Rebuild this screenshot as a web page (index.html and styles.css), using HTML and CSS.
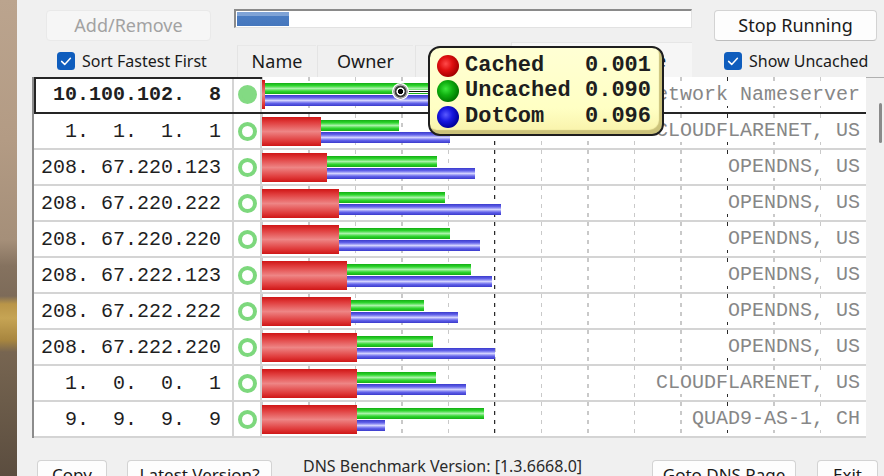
FILE: index.html
```html
<!DOCTYPE html>
<html>
<head>
<meta charset="utf-8">
<title>DNS Benchmark</title>
<link rel="stylesheet" href="styles.css">
</head>
<body>
<div class="desktop"></div>
<div class="window">
  <div class="toprow">
    <button class="btn btn-add" disabled>Add/Remove</button>
    <div class="progress"><div class="progress-fill" style="width:52px"></div></div>
    <button class="btn btn-stop">Stop Running</button>
  </div>
  <div class="midrow">
    <label class="check check-sort"><svg class="box" width="18" height="18" viewBox="0 0 18 18"><rect width="18" height="18" rx="3.5" fill="#0f5dbd"/><path d="M4.6 9.4 L7.7 12.4 L13.4 6.2" stroke="#fff" stroke-width="1.5" fill="none" stroke-linecap="round" stroke-linejoin="round"/></svg><span>Sort Fastest First</span></label>
    <div class="tabs">
      <div class="tab tab-name">Name</div>
      <div class="tab tab-owner">Owner</div>
      <div class="tab tab-status">Status</div>
      <div class="tab tab-resp active">Response Time</div>
    </div>
    <label class="check check-show"><svg class="box" width="18" height="18" viewBox="0 0 18 18"><rect width="18" height="18" rx="3.5" fill="#0f5dbd"/><path d="M4.6 9.4 L7.7 12.4 L13.4 6.2" stroke="#fff" stroke-width="1.5" fill="none" stroke-linecap="round" stroke-linejoin="round"/></svg><span>Show Uncached</span></label>
  </div>
  <div class="list">
    <div class="rows">
      <div class="row selected">
        <div class="ip bold">10.100.102.  8</div>
        <div class="stat"><span class="dot filled"></span></div>
        <div class="chart">
          <div class="red" style="width:3px"></div>
          <div class="gb"><div class="green" style="width:209px"></div><div class="blue" style="width:220px"></div></div>
          <div class="owner">Network Nameserver</div>
        </div>
      </div>
      <div class="row">
        <div class="ip">  1.  1.  1.  1</div>
        <div class="stat"><span class="dot"></span></div>
        <div class="chart">
          <div class="red" style="width:59px"></div>
          <div class="gb"><div class="green" style="width:78px"></div><div class="blue" style="width:129px"></div></div>
          <div class="owner">CLOUDFLARENET, US</div>
        </div>
      </div>
      <div class="row">
        <div class="ip">208. 67.220.123</div>
        <div class="stat"><span class="dot"></span></div>
        <div class="chart">
          <div class="red" style="width:65px"></div>
          <div class="gb"><div class="green" style="width:110px"></div><div class="blue" style="width:148px"></div></div>
          <div class="owner">OPENDNS, US</div>
        </div>
      </div>
      <div class="row">
        <div class="ip">208. 67.220.222</div>
        <div class="stat"><span class="dot"></span></div>
        <div class="chart">
          <div class="red" style="width:77px"></div>
          <div class="gb"><div class="green" style="width:106px"></div><div class="blue" style="width:162px"></div></div>
          <div class="owner">OPENDNS, US</div>
        </div>
      </div>
      <div class="row">
        <div class="ip">208. 67.220.220</div>
        <div class="stat"><span class="dot"></span></div>
        <div class="chart">
          <div class="red" style="width:77px"></div>
          <div class="gb"><div class="green" style="width:111px"></div><div class="blue" style="width:141px"></div></div>
          <div class="owner">OPENDNS, US</div>
        </div>
      </div>
      <div class="row">
        <div class="ip">208. 67.222.123</div>
        <div class="stat"><span class="dot"></span></div>
        <div class="chart">
          <div class="red" style="width:85px"></div>
          <div class="gb"><div class="green" style="width:124px"></div><div class="blue" style="width:145px"></div></div>
          <div class="owner">OPENDNS, US</div>
        </div>
      </div>
      <div class="row">
        <div class="ip">208. 67.222.222</div>
        <div class="stat"><span class="dot"></span></div>
        <div class="chart">
          <div class="red" style="width:89px"></div>
          <div class="gb"><div class="green" style="width:73px"></div><div class="blue" style="width:107px"></div></div>
          <div class="owner">OPENDNS, US</div>
        </div>
      </div>
      <div class="row">
        <div class="ip">208. 67.222.220</div>
        <div class="stat"><span class="dot"></span></div>
        <div class="chart">
          <div class="red" style="width:95px"></div>
          <div class="gb"><div class="green" style="width:76px"></div><div class="blue" style="width:138px"></div></div>
          <div class="owner">OPENDNS, US</div>
        </div>
      </div>
      <div class="row">
        <div class="ip">  1.  0.  0.  1</div>
        <div class="stat"><span class="dot"></span></div>
        <div class="chart">
          <div class="red" style="width:95px"></div>
          <div class="gb"><div class="green" style="width:79px"></div><div class="blue" style="width:109px"></div></div>
          <div class="owner">CLOUDFLARENET, US</div>
        </div>
      </div>
      <div class="row">
        <div class="ip">  9.  9.  9.  9</div>
        <div class="stat"><span class="dot"></span></div>
        <div class="chart">
          <div class="red" style="width:95px"></div>
          <div class="gb"><div class="green" style="width:127px"></div><div class="blue" style="width:28px"></div></div>
          <div class="owner">QUAD9-AS-1, CH</div>
        </div>
      </div>
    </div>
    <div class="scroll"><div class="thumb"></div></div>
  </div>
  <div class="bottomrow">
    <button class="btn btn-copy">Copy</button>
    <button class="btn btn-latest">Latest Version?</button>
    <div class="version">DNS Benchmark Version: [1.3.6668.0]</div>
    <button class="btn btn-goto">Goto DNS Page</button>
    <button class="btn btn-exit">Exit</button>
  </div>
</div>
<div class="connector"></div>
<div class="marker"></div>
<div class="tooltip">
  <div class="tip-row"><span class="ball ball-red"></span><span class="tip-label">Cached</span><span class="tip-val">0.001</span></div>
  <div class="tip-row"><span class="ball ball-green"></span><span class="tip-label">Uncached</span><span class="tip-val">0.090</span></div>
  <div class="tip-row"><span class="ball ball-blue"></span><span class="tip-label">DotCom</span><span class="tip-val">0.096</span></div>
</div>
</body>
</html>
```

FILE: styles.css
```css
* { box-sizing: border-box; }
html, body { margin: 0; padding: 0; }
body {
  display: flex;
  width: 884px;
  height: 476px;
  overflow: hidden;
  font-family: "Noto Sans", "Open Sans", sans-serif;
  background: #f0f0f0;
  color: #1a1a1a;
}
.desktop {
  width: 17px;
  flex: none;
  background: linear-gradient(to bottom,
    #bba48e 0px, #b39b84 140px, #a58f79 240px, #85725f 266px,
    #7d6b59 296px, #b99548 304px, #c6a454 318px, #a8863f 340px,
    #776551 352px, #6c5c4a 400px, #5b4d3f 476px);
}
.window {
  flex: 1;
  background: #f0f0f0;
  display: flex;
  flex-direction: column;
}

/* top row */
.toprow {
  display: flex;
  align-items: flex-start;
  height: 41px;
  padding-top: 9px;
  flex: none;
}
.btn {
  appearance: none;
  font-family: "Noto Sans", "Open Sans", sans-serif;
  font-size: 18px;
  line-height: 1;
  height: 31px;
  padding: 0 0 2px 0;
  border-radius: 4px;
  border: 1px solid #d3d3d3;
  border-bottom-color: #bdbdbd;
  background: #fdfdfd;
  color: #1a1a1a;
  display: flex;
  align-items: center;
  justify-content: center;
  flex: none;
}
.btn-add {
  margin-left: 29px;
  margin-top: 1px;
  width: 165px;
  background: #f6f6f6;
  border-color: #e9e9e9;
  color: #a2a2a2;
}
.progress {
  margin-left: 23px;
  width: 458px;
  height: 19px;
  flex: none;
  background: #fff;
  border: 1px solid #e2e2e2;
  border-top: 2px solid #8a8a8a;
  border-left: 2px solid #8a8a8a;
  padding: 1px;
}
.progress-fill {
  height: 100%;
  background: linear-gradient(to bottom, #7fa3d6 0%, #7fa3d6 30%, #4a7cc2 31%, #4677bd 100%);
}
.btn-stop {
  margin-left: 22px;
  margin-top: 1px;
  width: 163px;
}

/* middle row */
.midrow {
  display: flex;
  align-items: flex-end;
  height: 36px;
  flex: none;
}
.check {
  display: flex;
  align-items: center;
  gap: 7px;
  align-self: flex-start;
  margin-top: 11px;
  font-size: 16px;
  line-height: 18px;
  color: #1a1a1a;
  flex: none;
}
.check .box { flex: none; display: block; }
.check-sort { margin-left: 40px; width: 180px; }
.check-show { margin-left: 32px; }
.tabs {
  display: flex;
  align-items: flex-end;
  width: 455px;
  flex: none;
}
.tab {
  height: 32px;
  display: flex;
  align-items: center;
  justify-content: center;
  font-size: 18px;
  color: #1a1a1a;
  background: #f0f0f0;
  border-left: 1px solid #e4e4e4;
  border-top: 1px solid #e8e8e8;
  padding-bottom: 2px;
  flex: none;
}
.tab-name { width: 79px; margin-right: 1px; }
.tab-owner { width: 96px; margin-right: 2px; }
.tab-status { width: 96px; }
.tab-resp { width: 181px; }
.tab.active {
  height: 35px;
  background: #f6f6f6;
  border-color: #e6e6e6;
  padding-bottom: 0;
}

/* list */
.list {
  display: flex;
  height: 361px;
  margin-left: 15px;
  flex: none;
}
.rows {
  width: 834px;
  border-left: 2px solid #8c8c8c;
  display: flex;
  flex-direction: column;
  flex: none;
}
.row {
  display: flex;
  height: 36px;
  background: #fff;
  border-bottom: 2px solid #d4d4d4;
  flex: none;
}
.row.selected {
  height: 37px;
  outline: 2px solid #252525;
  outline-offset: -2px;
}
.ip {
  width: 200px;
  border-right: 2px solid #d4d4d4;
  display: flex;
  align-items: center;
  justify-content: flex-end;
  padding-right: 11px;
  font-family: "Liberation Mono", "Courier New", monospace;
  font-size: 20px;
  color: #1f1f1f;
  white-space: pre;
  flex: none;
}
.ip.bold { font-weight: bold; }
.stat {
  width: 28px;
  border-right: 2px solid #d4d4d4;
  display: flex;
  align-items: center;
  justify-content: center;
  flex: none;
}
.dot {
  width: 19px;
  height: 19px;
  border-radius: 50%;
  border: 4px solid #7dd87d;
  display: block;
}
.dot.filled { background: #83da83; border-color: #83da83; }
.chart {
  flex: 1;
  position: relative;
  z-index: 0;
  display: flex;
  align-items: center;
  background: #fff;
}
.chart::before {
  content: "";
  position: absolute;
  inset: 0;
  z-index: -1;
  background-image:
    repeating-linear-gradient(90deg, transparent 0 232px, #2a2a2a 232px 233px),
    repeating-linear-gradient(90deg, #c9c9c9 0 1px, transparent 1px 46.5px);
  -webkit-mask-image: repeating-linear-gradient(to bottom, #000 0 4px, transparent 4px 9px);
  mask-image: repeating-linear-gradient(to bottom, #000 0 4px, transparent 4px 9px);
}
.red {
  height: 29px;
  flex: none;
  background: linear-gradient(to bottom, #cf1616 0%, #e03c3c 18%, #ee8585 50%, #e03c3c 82%, #cf1616 100%);
}
.gb {
  display: flex;
  flex-direction: column;
  gap: 1px;
  flex: none;
}
.green {
  height: 11px;
  background: linear-gradient(to bottom, #14ad14 0%, #2ed62e 25%, #a9f2a9 50%, #2ed62e 75%, #14ad14 100%);
}
.blue {
  height: 11px;
  background: linear-gradient(to bottom, #3a3acc 0%, #6363ea 25%, #d2d2ff 50%, #6363ea 75%, #3a3acc 100%);
}
.owner {
  margin-left: auto;
  background: #fff;
  padding: 0 6px 0 2px;
  font-family: "Liberation Mono", "Courier New", monospace;
  font-size: 20px;
  line-height: 22px;
  color: #878787;
  white-space: pre;
  flex: none;
}
.scroll {
  width: 18px;
  flex: none;
  border-top: 1px solid #b0b0b0;
  background: #f0f0f0;
}
.thumb {
  margin-top: 25px;
  margin-left: 13px;
  width: 3px;
  height: 40px;
  border-radius: 2px;
  background: #8a8a8a;
}

/* bottom row */
.bottomrow {
  display: flex;
  align-items: flex-start;
  margin-top: 22px;
  flex: none;
}
.bottomrow .btn { font-size: 17px; }
.btn-copy { margin-left: 20px; width: 70px; }
.btn-latest { margin-left: 20px; width: 145px; }
.version {
  margin-left: 31px;
  width: 349px;
  margin-top: -3px;
  font-size: 16px;
  line-height: 18px;
  color: #2a2a2a;
  flex: none;
}
.btn-goto { width: 144px; }
.btn-exit { margin-left: 21px; width: 61px; }

/* tooltip overlay */
.connector {
  position: absolute;
  left: 408px;
  top: 91px;
  width: 21px;
  height: 1px;
  background: #111;
  box-shadow: 0 1px 0 #fff, 0 -1px 0 #fff;
}
.marker {
  position: absolute;
  left: 392px;
  top: 83px;
  width: 17px;
  height: 17px;
  border-radius: 50%;
  background: radial-gradient(circle, #000 0 2.4px, #fff 2.9px 3.8px, #3a3a3a 4.3px 5.6px, #a8a8a8 6.1px 7px, #fff 7.4px);
}
.tooltip {
  position: absolute;
  left: 428px;
  top: 46px;
  width: 236px;
  height: 90px;
  border: 2px solid #1e1e1e;
  border-radius: 12px;
  background: linear-gradient(to bottom, #ffffd4 0%, #ffffc4 70%, #f8f2a8 100%);
  box-shadow: inset -3px -4px 1px #cbc27a;
  padding: 5px 11px 0 7px;
}
.tip-row {
  display: flex;
  align-items: center;
  height: 25.5px;
}
.ball {
  width: 22px;
  height: 22px;
  border-radius: 50%;
  flex: none;
}
.ball-red { background: radial-gradient(circle at 40% 40%, #ff4a4a 0%, #e01010 35%, #a80000 70%, #6a0000 100%); }
.ball-green { background: radial-gradient(circle at 40% 40%, #3de83d 0%, #10b010 35%, #007a00 70%, #004800 100%); }
.ball-blue { background: radial-gradient(circle at 40% 40%, #5a5aff 0%, #1818e0 35%, #0000a0 70%, #000060 100%); }
.tip-label {
  margin-left: 6px;
  font-family: "Liberation Mono", "Courier New", monospace;
  font-weight: bold;
  font-size: 22px;
  line-height: 24px;
  color: #1e1e1e;
}
.tip-val {
  margin-left: auto;
  font-family: "Liberation Mono", "Courier New", monospace;
  font-weight: bold;
  font-size: 22px;
  line-height: 24px;
  color: #1e1e1e;
}
```
